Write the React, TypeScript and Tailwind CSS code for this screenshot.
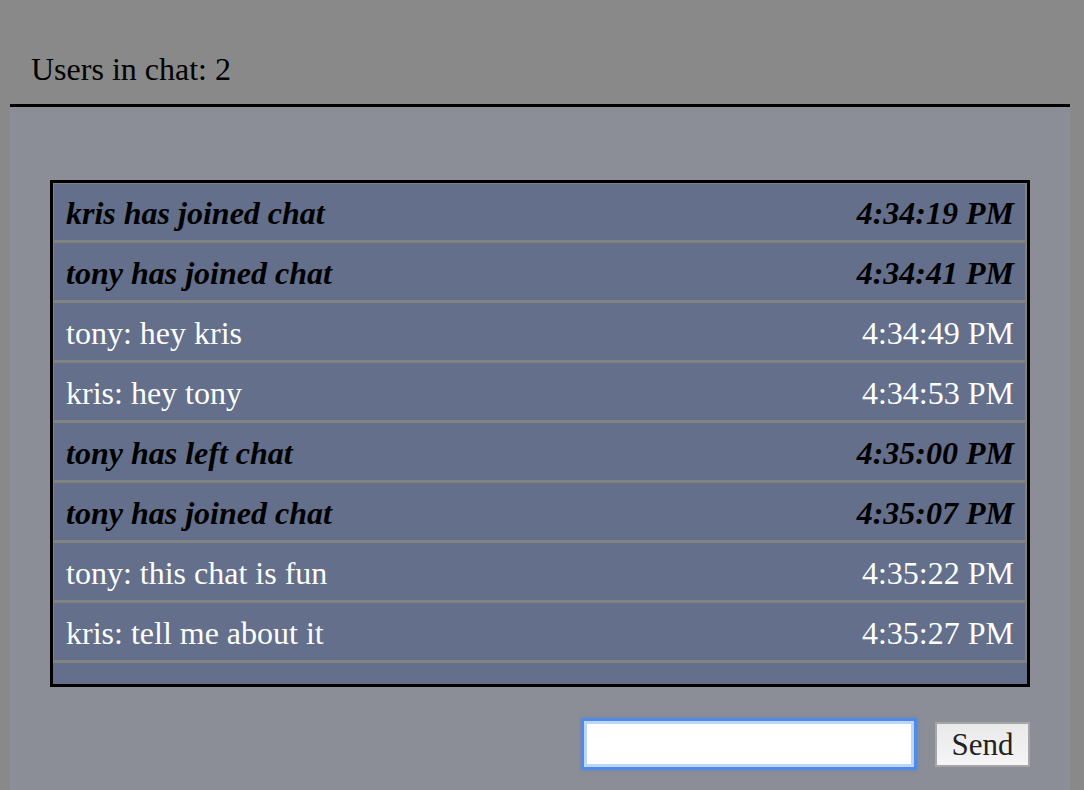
import React from 'react';

type Msg = { text: string; time: string; event?: boolean };

const messages: Msg[] = [
  { text: 'kris has joined chat', time: '4:34:19 PM', event: true },
  { text: 'tony has joined chat', time: '4:34:41 PM', event: true },
  { text: 'tony: hey kris', time: '4:34:49 PM' },
  { text: 'kris: hey tony', time: '4:34:53 PM' },
  { text: 'tony has left chat', time: '4:35:00 PM', event: true },
  { text: 'tony has joined chat', time: '4:35:07 PM', event: true },
  { text: 'tony: this chat is fun', time: '4:35:22 PM' },
  { text: 'kris: tell me about it', time: '4:35:27 PM' },
];

export default function App() {
  return (
    <div className="min-h-[790px] w-[1084px] bg-[#898989] overflow-hidden" style={{ fontFamily: '"Liberation Serif", "Times New Roman", serif' }}>
      <div className="h-[104px] pl-[31px] pt-[51px] text-[32px] leading-[37px] text-black">
        Users in chat: 2
      </div>
      <div className="ml-[10px] w-[1060px] min-h-[686px] bg-[#8b8e97] border-t-[3px] border-black px-[40px] pt-[73px]">
        <div className="border-[3px] border-black bg-[#636f8b] pb-[21px]">
          {messages.map((m, i) => (
            <div
              key={i}
              className={`h-[60px] flex items-center justify-between pt-[2px] pl-[12px] pr-[11px] border-l border-r-2 border-b-[3px] border-[#828282] ${i === 0 ? 'border-t' : ''} text-[32px] ${m.event ? 'font-bold italic text-black' : 'text-white'}`}
            >
              <span>{m.text}</span>
              <span>{m.time}</span>
            </div>
          ))}
        </div>
        <div className="flex justify-end items-center gap-[21px] mt-[34px]">
          <input
            type="text"
            className="w-[330px] h-[46px] bg-white border-[3px] border-[#bcd4f6] outline-none ring-[3px] ring-[#4f8ae4] shadow-[0_0_4px_3px_rgba(70,120,220,0.45)]"
          />
          <button className="h-[45px] w-[95px] border-2 border-[#a6a6a6] bg-gradient-to-b from-[#e9e9e9] to-[#f5f5f5] text-[31px] leading-none text-[#222]">
            Send
          </button>
        </div>
      </div>
    </div>
  );
}
